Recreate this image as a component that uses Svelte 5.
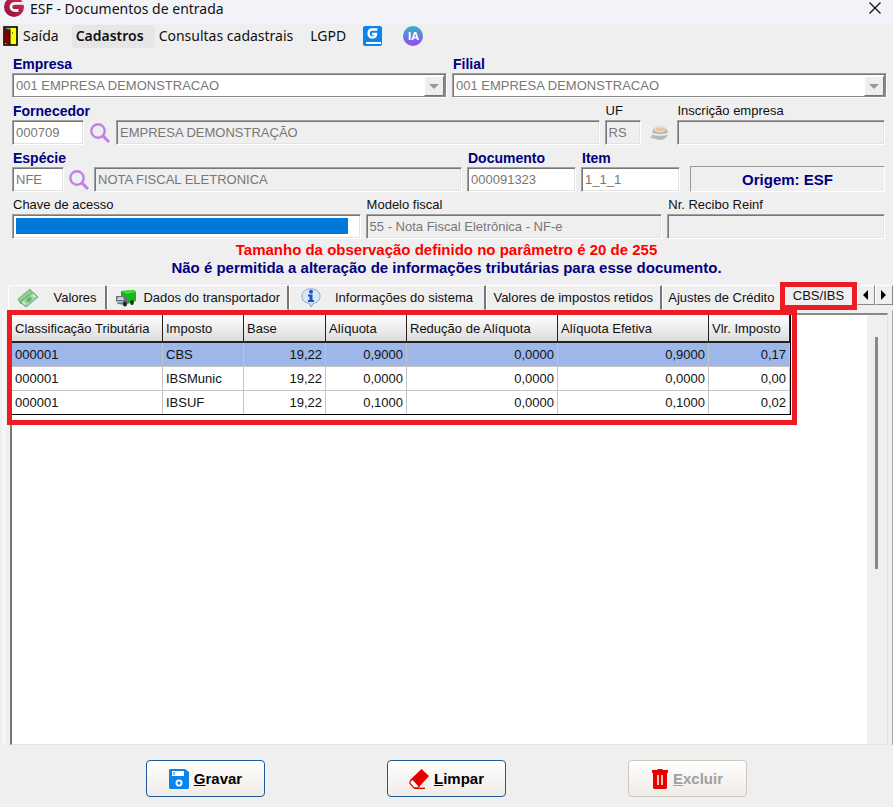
<script>
    let empresa = '001 EMPRESA DEMONSTRACAO';
    let filial = '001 EMPRESA DEMONSTRACAO';

    const tabs = [
        { id: 'valores', label: 'Valores', icon: 'money' },
        { id: 'transportador', label: 'Dados do transportador', icon: 'truck' },
        { id: 'sistema', label: 'Informações do sistema', icon: 'info' },
        { id: 'retidos', label: 'Valores de impostos retidos' },
        { id: 'ajustes', label: 'Ajustes de Crédito' },
        { id: 'cbs', label: 'CBS/IBS' }
    ];

    let current = 'cbs';

    const columns = [
        { label: 'Classificação Tributária', width: 151 },
        { label: 'Imposto', width: 81 },
        { label: 'Base', width: 82, num: true },
        { label: 'Alíquota', width: 81, num: true },
        { label: 'Redução de Alíquota', width: 151, num: true },
        { label: 'Alíquota Efetiva', width: 151, num: true },
        { label: 'Vlr. Imposto', width: 81, num: true }
    ];

    const rows = [
        ['000001', 'CBS', '19,22', '0,9000', '0,0000', '0,9000', '0,17'],
        ['000001', 'IBSMunic', '19,22', '0,0000', '0,0000', '0,0000', '0,00'],
        ['000001', 'IBSUF', '19,22', '0,1000', '0,0000', '0,1000', '0,02']
    ];

    let selected = 0;
</script>

{#snippet search()}
    <svg width="20" height="20" viewBox="0 0 20 20" fill="none" stroke="#bf80ea" aria-hidden="true">
        <circle cx="8" cy="8" r="6.7" stroke-width="2.4" />
        <path d="M12.4 12.4 19 19" stroke-width="3" />
    </svg>
{/snippet}

<div class="window">
    <header class="title">
        <svg width="22" height="22" viewBox="0 0 22 22" aria-hidden="true">
            <defs>
                <linearGradient id="brand" x1="0" y1="1" x2="1" y2="0">
                    <stop offset="0" stop-color="#86143f" />
                    <stop offset="1" stop-color="#e02a4c" />
                </linearGradient>
            </defs>
            <circle cx="11" cy="10" r="10" fill="url(#brand)" />
            <path d="M22 6.300H12.500C6.500 6.300 6.500 13.500 12 13.500h3.500" fill="none" stroke="#f1f3f9" stroke-width="2.800" />
        </svg>
        <h1>ESF - Documentos de entrada</h1>
        <button class="close" aria-label="Fechar">
            <svg width="12" height="12" viewBox="0 0 12 12" stroke="#111" stroke-width="1.3"><path d="M.5.5l11 11M11.500.5l-11 11" /></svg>
        </button>
    </header>

    <nav class="menu">
        <button class="saida">
            <svg width="15" height="20" viewBox="0 0 15 20" aria-hidden="true">
                <rect x="1" y="1" width="13" height="18" fill="#ff0" stroke="#000" stroke-width="1.6" />
                <path d="M1.500 1.500 7 4v15l-5.500-2z" fill="#800000" />
                <path d="M2 2h5v2z" fill="#0bb" />
                <path d="M7 3v16M9 7h1" stroke="#000" />
            </svg>
            Saída
        </button>
        <button class="active">Cadastros</button>
        <button>Consultas cadastrais</button>
        <button>LGPD</button>
        <button class="tool" aria-label="Manual">
            <svg width="19" height="20" viewBox="0 0 19 20">
                <rect width="19" height="20" rx="2" fill="#0b84ee" />
                <path d="M14.500 3.500H9C4.500 3.500 4.500 11.500 9 11.500c3 0 4-1 4-3.500H9" fill="none" stroke="#fff" stroke-width="2.400" />
                <path d="M3 16h15v2H3z" fill="#fff" />
            </svg>
        </button>
        <button class="tool ia" aria-label="Assistente IA"><span>IA</span></button>
    </nav>

    <form class="fields">
        <div class="row companies">
            <div class="field req">
                <label for="empresa">Empresa</label>
                <div class="combo">
                    <select id="empresa" bind:value={empresa} disabled><option>001 EMPRESA DEMONSTRACAO</option></select>
                    <span class="arrow"></span>
                </div>
            </div>
            <div class="field req">
                <label for="filial">Filial</label>
                <div class="combo">
                    <select id="filial" bind:value={filial} disabled><option>001 EMPRESA DEMONSTRACAO</option></select>
                    <span class="arrow"></span>
                </div>
            </div>
        </div>

        <div class="row supplier">
            <div class="field req">
                <label for="fornecedor">Fornecedor</label>
                <input id="fornecedor" value="000709" readonly />
            </div>
            <button type="button" class="lookup" aria-label="Buscar fornecedor">{@render search()}</button>
            <input class="off" aria-label="Nome do fornecedor" value="EMPRESA DEMONSTRAÇÃO" readonly />
            <div class="field uf">
                <label for="uf">UF</label>
                <input id="uf" class="off" value="RS" readonly />
            </div>
            <button type="button" class="lookup" aria-label="Consultar inscrição">
                <svg width="20" height="18" viewBox="0 0 20 18">
                    <path d="M1 14 5 8l9 8z" fill="#c4c4c4" />
                    <ellipse cx="11" cy="9" rx="8" ry="7" fill="#b7b7b7" />
                    <ellipse cx="11" cy="5" rx="6" ry="3.500" fill="#dcdcdc" />
                    <path d="M7 4h9v3H7z" fill="#e7c99d" />
                    <path d="M3 9.500c4 2 12 2 16 0" fill="none" stroke="#eee" stroke-width="1.500" />
                </svg>
            </button>
            <div class="field">
                <label for="inscricao">Inscrição empresa</label>
                <input id="inscricao" class="off" readonly />
            </div>
        </div>

        <div class="row kind">
            <div class="field req">
                <label for="especie">Espécie</label>
                <input id="especie" value="NFE" readonly />
            </div>
            <button type="button" class="lookup" aria-label="Buscar espécie">{@render search()}</button>
            <input class="off" aria-label="Descrição da espécie" value="NOTA FISCAL ELETRONICA" readonly />
            <div class="field req">
                <label for="documento">Documento</label>
                <input id="documento" value="000091323" readonly />
            </div>
            <div class="field req">
                <label for="item">Item</label>
                <input id="item" value="1_1_1" readonly />
            </div>
            <div class="origin">Origem: ESF</div>
        </div>

        <div class="row keys">
            <div class="field">
                <label for="chave">Chave de acesso</label>
                <input id="chave" class="masked" readonly />
            </div>
            <div class="field">
                <label for="modelo">Modelo fiscal</label>
                <input id="modelo" class="off" value="55 - Nota Fiscal Eletrônica - NF-e" readonly />
            </div>
            <div class="field">
                <label for="recibo">Nr. Recibo Reinf</label>
                <input id="recibo" class="off" readonly />
            </div>
        </div>
    </form>

    <div class="notices">
        <p class="warn">Tamanho da observação definido no parâmetro é 20 de 255</p>
        <p>Não é permitida a alteração de informações tributárias para esse documento.</p>
    </div>

    <div class="tabs" role="tablist">
        {#each tabs as tab (tab.id)}
            <button role="tab" class="tab {tab.id}" class:current={tab.id == current} aria-selected={tab.id == current} on:click={() => (current = tab.id)}>
                {#if tab.icon == 'money'}
                    <svg width="22" height="20" viewBox="0 0 22 20" aria-hidden="true">
                        <path d="M1 11 13 1l3 4L4 16z" fill="#8fce94" stroke="#6fb577" />
                        <path d="M3 14 16 4l5 5-12 10z" fill="#a0d6a4" stroke="#5fa868" />
                        <ellipse cx="12" cy="11.500" rx="3" ry="2.300" fill="#6bb573" transform="rotate(-38 12 11.500)" />
                        <path d="m6 14 2 2M16 7l2 2" stroke="#e6f6e6" stroke-width="1.500" />
                    </svg>
                {:else if tab.icon == 'truck'}
                    <svg width="22" height="18" viewBox="0 0 22 18" aria-hidden="true">
                        <path d="M6 2 19 1l2 2v9l-9 3-6-6z" fill="#14b51e" />
                        <path d="M6 2 19 1l2 2-9 2z" fill="#3bdc3f" />
                        <path d="M1 7h8l3 2v7l-9-1-2-3z" fill="#65717c" />
                        <path d="M3 8h5l1 3H2z" fill="#c5d3dc" />
                        <path d="M2 13h6" stroke="#e9eef0" />
                        <ellipse cx="10" cy="15" rx="2" ry="2.500" fill="#222" />
                        <ellipse cx="17" cy="13.500" rx="1.800" ry="2.500" fill="#222" />
                    </svg>
                {:else if tab.icon == 'info'}
                    <svg width="20" height="20" viewBox="0 0 20 20" aria-hidden="true">
                        <path d="M10 .8c5.500 0 9 3.200 9 7.400 0 4-3 6.600-6.500 7.200L10 19l-1.500-3.600C4 15 1 12.200 1 8.200 1 4 4.500.8 10 .8z" fill="#d9e8f6" stroke="#84a9cc" />
                        <circle cx="10" cy="3.800" r="2" fill="#1c54b8" />
                        <path d="M7 6.500h4.500V12H13v2H7v-2h1.500V8.500H7z" fill="#1c54b8" />
                    </svg>
                {/if}
                <span>{tab.label}</span>
            </button>
        {/each}
        <button class="scroll" aria-label="Abas anteriores"><svg width="5" height="10" viewBox="0 0 5 10"><path d="M5 0v10L0 5z" /></svg></button>
        <button class="scroll" aria-label="Próximas abas"><svg width="5" height="10" viewBox="0 0 5 10"><path d="M0 0v10l5-5z" /></svg></button>
    </div>

    <main class="page">
        <div class="grid">
            <div class="sheet">
                <div class="marked">
                    <table>
                        <colgroup>
                            {#each columns as col}
                                <col style="width: {col.width}px" />
                            {/each}
                        </colgroup>
                        <thead>
                            <tr>
                                {#each columns as col}
                                    <th>{col.label}</th>
                                {/each}
                            </tr>
                        </thead>
                        <tbody>
                            {#each rows as row, i}
                                <tr class:selected={i == selected} on:click={() => (selected = i)}>
                                    {#each row as cell, c}
                                        <td class:num={columns[c].num}>{cell}</td>
                                    {/each}
                                </tr>
                            {/each}
                        </tbody>
                    </table>
                </div>
            </div>
            <div class="track"><div class="thumb"></div></div>
        </div>
    </main>

    <footer class="actions">
        <button>
            <svg width="20" height="20" viewBox="0 0 20 20" aria-hidden="true">
                <path d="M1 0h15l4 3v16l-1 1H1l-1-1V1z" fill="#0b84ee" />
                <path d="M3 2h12v5H3z" fill="#fff" />
                <path d="M5 3v3" stroke="#0b84ee" />
                <circle cx="10" cy="14" r="2.600" fill="none" stroke="#fff" stroke-width="1.800" />
            </svg>
            <span><u>G</u>ravar</span>
        </button>
        <button>
            <svg width="20" height="20" viewBox="0 0 20 20" aria-hidden="true">
                <path d="M12.500 0 20 7 9.500 18.500 1 11z" fill="#e60000" />
                <path d="m3.500 10 6.500 7-1.500 2H5l-4-4.500v-2z" fill="#fff" stroke="#e60000" stroke-width="1.200" />
                <path d="M5 19.300h11" stroke="#e60000" stroke-width="1.400" />
            </svg>
            <span><u>L</u>impar</span>
        </button>
        <button disabled>
            <svg width="16" height="20" viewBox="0 0 16 20" aria-hidden="true">
                <path d="M0 1h5l1-1h4l1 1h5v3h-1v15l-1 1H2l-1-1V4H0z" fill="#e60000" />
                <path d="M6 6v10M10 6v10" stroke="#fff" stroke-width="1.500" />
            </svg>
            <span><u>E</u>xcluir</span>
        </button>
    </footer>
</div>

<style>
    :global(body) {
        margin: 0;
    }

    .window {
        box-sizing: border-box;
        min-height: 100vh;
        display: flex;
        flex-direction: column;
        background: #efefef;
        color: #111;
        font: 13px/16px "Liberation Sans", Arial, sans-serif;
    }

    .window *,
    .window *::after {
        box-sizing: border-box;
    }

    button,
    input,
    select {
        margin: 0;
        padding: 0;
        border: 0;
        border-radius: 0;
        background: none;
        color: inherit;
        font: inherit;
    }

    svg {
        flex: none;
        display: block;
    }

    .title {
        display: flex;
        align-items: flex-start;
        gap: 5px;
        height: 24px;
        padding: 0 12px 0 3px;
        background: #f1f3f9;
    }

    .title svg {
        margin-top: -3px;
    }

    .title h1 {
        flex: 1;
        margin: 0;
        font: 14px/18px "Noto Sans", sans-serif;
    }

    .title .close {
        padding-top: 5px;
    }

    .menu {
        display: flex;
        align-items: center;
        height: 24px;
        padding-left: 3px;
        font: 14px/20px "Noto Sans", sans-serif;
    }

    .menu button {
        height: 23px;
        padding: 0 4px;
        margin-right: 9px;
        white-space: nowrap;
    }

    .menu .saida {
        display: flex;
        align-items: center;
        gap: 5px;
        padding-left: 0;
    }

    .menu .active {
        width: 83px;
        margin-right: 0;
        border-radius: 4px;
        background: #e6e6e6;
        font-weight: 600;
        text-align: left;
    }

    .menu .tool {
        margin-right: 13px;
    }

    .ia span {
        display: block;
        width: 20px;
        border-radius: 10px;
        background: linear-gradient(#2fb5c8, #9a45f5);
        color: #fff;
        font: bold 11px/20px "Open Sans", sans-serif;
        text-align: center;
    }

    .fields {
        display: flex;
        flex-direction: column;
        gap: 5px;
        padding: 8px 8px 0 12px;
    }

    .row {
        display: grid;
        align-items: end;
        gap: 5px;
    }

    .companies {
        grid-template-columns: 1fr 1fr;
        margin-right: -2px;
    }

    .supplier {
        grid-template-columns: 72px 22px minmax(0, 487fr) 36px 26px minmax(0, 210fr);
    }

    .kind {
        grid-template-columns: 52px 20px minmax(0, 368fr) minmax(0, 109fr) minmax(0, 99fr) minmax(0, 200fr);
    }

    .keys {
        grid-template-columns: minmax(0, 349fr) minmax(0, 297fr) minmax(0, 218fr);
    }

    .field {
        display: flex;
        flex-direction: column;
        min-width: 0;
    }

    label {
        height: 17px;
        padding-left: 1px;
        line-height: 16px;
        white-space: nowrap;
    }

    .req label {
        color: #000080;
        font-size: 14px;
        font-weight: bold;
    }

    input,
    .combo {
        width: 100%;
        height: 25px;
        border: 1px solid;
        border-color: #a0a0a0 #fff #fff #a0a0a0;
        box-shadow: inset 1px 1px #777, inset -1px -1px #e3e3e3;
        background: #fff;
        color: #777;
    }

    input {
        padding: 0 0 0 3px;
    }

    .off {
        background: #efefef;
    }

    .masked {
        padding: 3px 12px 4px 3px;
        background: linear-gradient(#0078d7, #0078d7) content-box, #fff;
    }

    .combo {
        display: flex;
        padding: 2px 2px 1px 3px;
        box-shadow: inset 1px 1px #777, inset -2px -1px #8a8a8a;
    }

    .combo select {
        flex: 1;
        min-width: 0;
        appearance: none;
        opacity: 1;
        color: #777;
    }

    .arrow {
        display: flex;
        align-items: center;
        justify-content: center;
        width: 20px;
        border: 1px solid;
        border-color: #fff #777 #777 #fff;
        background: #efefef;
    }

    .arrow::after {
        content: "";
        border: 5px solid transparent;
        border-top-color: #999;
        border-bottom: 0;
    }

    .lookup {
        display: flex;
        align-items: center;
        justify-content: center;
        height: 25px;
    }

    .origin {
        height: 26px;
        margin-left: 5px;
        border: 1px solid;
        border-color: #999 #fff #fff #999;
        color: #000080;
        font-size: 15px;
        font-weight: bold;
        line-height: 26px;
        text-align: center;
    }

    .notices {
        padding: 2px 0 8px;
        color: #000080;
        font-size: 15px;
        font-weight: bold;
        line-height: 18px;
        text-align: center;
    }

    .notices p {
        margin: 0;
    }

    .notices .warn {
        color: #f00;
    }

    .tabs {
        display: flex;
        align-items: stretch;
        height: 25px;
        padding-left: 8px;
    }

    .tab {
        display: flex;
        align-items: center;
        justify-content: center;
        min-width: 0;
        border: 1px solid;
        border-color: #fff #777 transparent #fff;
        border-right-width: 2px;
        border-radius: 2px 2px 0 0;
        white-space: nowrap;
    }

    .tab span {
        padding-top: 1px;
    }

    .valores {
        flex: 96 1 0;
        gap: 14px;
    }

    .transportador {
        flex: 179 1 0;
        gap: 6px;
    }

    .sistema {
        flex: 193 1 0;
        gap: 14px;
    }

    .retidos {
        flex: 173 1 0;
    }

    .ajustes {
        flex: 117 1 0;
        border-right: 0;
    }

    .cbs {
        flex: 67 1 0;
        height: 28px;
        margin-top: -3px;
    }

    .tab.current {
        border: 5px solid #ed1c24;
        border-radius: 0;
    }

    .tab.current span {
        padding: 0;
    }

    .scroll {
        display: flex;
        align-items: center;
        justify-content: center;
        width: 18px;
        height: 20px;
        border: 1px solid;
        border-color: #fff #888 #888 #fff;
    }

    .page {
        flex: 1;
        display: flex;
        margin-left: 2px;
        padding: 3px 4px 0;
        border-right: 1px solid #aaa;
        border-left: 4px solid #f6f6f6;
    }

    .grid {
        flex: 1;
        display: flex;
        min-width: 0;
        border: 1px solid;
        border-color: #888 #e3e3e3 #e3e3e3 #777;
        border-width: 2px 1px 1px 2px;
    }

    .sheet {
        flex: 1;
        min-width: 0;
        background: #fff;
    }

    .marked {
        position: relative;
        width: 779px;
    }

    /* red frame around the tax lines */
    .marked::after {
        content: "";
        position: absolute;
        inset: -5px -6px -10px -5px;
        border: 5px solid #ed1c24;
        pointer-events: none;
    }

    table {
        width: 100%;
        table-layout: fixed;
        border-collapse: separate;
        border-spacing: 0;
        border-right: 1px solid #000;
        border-bottom: 1px solid #000;
    }

    th {
        height: 28px;
        padding: 2px 3px 0;
        border-right: 1px solid #222;
        border-bottom: 2px solid #222;
        background: linear-gradient(#fff, #dcdcdc);
        font-weight: normal;
        text-align: left;
        white-space: nowrap;
    }

    td {
        height: 24px;
        padding: 0 3px;
        border-right: 1px solid #c4c4c4;
        border-bottom: 1px solid #c4c4c4;
        white-space: nowrap;
    }

    tr:last-child td {
        height: 23px;
        border-bottom: 0;
    }

    .selected td {
        background: #9db7ea;
    }

    .num {
        text-align: right;
    }

    .track {
        width: 20px;
        padding: 22px 8px 0;
        background: #efefef;
    }

    .thumb {
        width: 3px;
        height: 232px;
        background: #888;
    }

    .actions {
        display: flex;
        justify-content: center;
        gap: 122px;
        padding: 15px 0 10px;
    }

    .actions button {
        display: flex;
        align-items: center;
        justify-content: center;
        gap: 5px;
        width: 119px;
        height: 37px;
        border: 1px solid #1f5a94;
        border-radius: 4px;
        background: linear-gradient(#fff, #efebe7);
        color: #000;
        font-size: 15px;
        font-weight: bold;
    }

    .actions button:disabled {
        border-color: #cfc8bd;
        color: #a0a0a0;
    }
</style>
